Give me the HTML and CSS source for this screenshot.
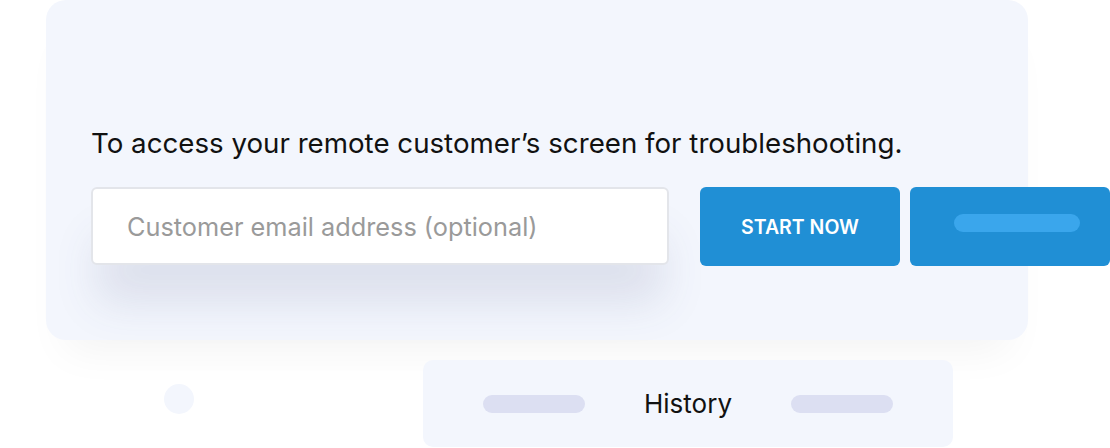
FILE: index.html
```html
<!DOCTYPE html>
<html lang="en">
<head>
    <meta charset="UTF-8">
    <meta name="viewport" content="width=device-width, initial-scale=1.0">
    <title>Remote Support</title>
    <link rel="stylesheet" href="styles.css">
</head>
<body>
    <div class="page">
        <div class="session-card">
            <p class="intro">To access your remote customer’s screen for troubleshooting.</p>
            <div class="session-row">
                <input type="text" class="email-input" placeholder="Customer email address (optional)">
                <button class="btn">START NOW</button>
                <button class="btn btn-blank"><span class="bar"></span></button>
            </div>
        </div>

        <div class="bottom-row">
            <span class="dot"></span>
            <div class="history-card">
                <span class="pill"></span>
                <span class="history-label">History</span>
                <span class="pill"></span>
            </div>
        </div>
    </div>
</body>
</html>
```

FILE: styles.css
```css
body {
    margin: 0;
    padding: 0;
    background-color: #fff;
    font-family: Inter, "Open Sans", sans-serif;
    overflow: hidden;
}

.page {
    width: 1110px;
    height: 448px;
}

.session-card {
    margin-left: 46px;
    width: 982px;
    height: 340px;
    box-sizing: border-box;
    padding: 124px 0 0 45px;
    background-color: #f3f6fd;
    border-radius: 20px;
    box-shadow: 0 30px 40px -20px rgba(0, 0, 0, 0.05);
}

.intro {
    margin: 0;
    font-size: 27.7px;
    line-height: 38px;
    color: #111;
}

.session-row {
    display: flex;
    align-items: flex-start;
    margin-top: 25px;
}

.email-input {
    flex-shrink: 0;
    width: 578px;
    height: 78px;
    box-sizing: border-box;
    padding: 0 34px;
    border: 2px solid #e3e5ea;
    border-radius: 6px;
    background-color: #fff;
    font-family: Inter, "Open Sans", sans-serif;
    font-size: 25.3px;
    color: #333;
    box-shadow: 0 44px 44px -6px rgba(70, 80, 120, 0.13);
    outline: none;
}

.email-input::placeholder {
    color: #9a9a9a;
}

.btn {
    flex-shrink: 0;
    width: 200px;
    height: 79px;
    margin-left: 31px;
    border: none;
    border-radius: 6px;
    background-color: #208fd5;
    color: #fff;
    font-family: Inter, "Open Sans", sans-serif;
    font-size: 19.5px;
    font-weight: 600;
    cursor: pointer;
}

.btn-blank {
    margin-left: 10px;
    display: flex;
    align-items: center;
    justify-content: center;
    padding: 0 0 8px 14px;
}

.bar {
    display: block;
    width: 126px;
    height: 18px;
    border-radius: 9px;
    background-color: #3aa6ec;
}

.bottom-row {
    display: flex;
    align-items: flex-start;
    margin-top: 20px;
    padding-left: 164px;
}

.dot {
    width: 30px;
    height: 30px;
    margin-top: 24px;
    border-radius: 50%;
    background-color: #f3f6fd;
}

.history-card {
    display: flex;
    align-items: center;
    justify-content: center;
    gap: 59px;
    width: 530px;
    height: 87px;
    margin-left: 229px;
    background-color: #f3f6fd;
    border-radius: 10px;
}

.pill {
    width: 102px;
    height: 18px;
    border-radius: 9px;
    background-color: #dcdff2;
}

.history-label {
    font-size: 26px;
    color: #111;
}
```
